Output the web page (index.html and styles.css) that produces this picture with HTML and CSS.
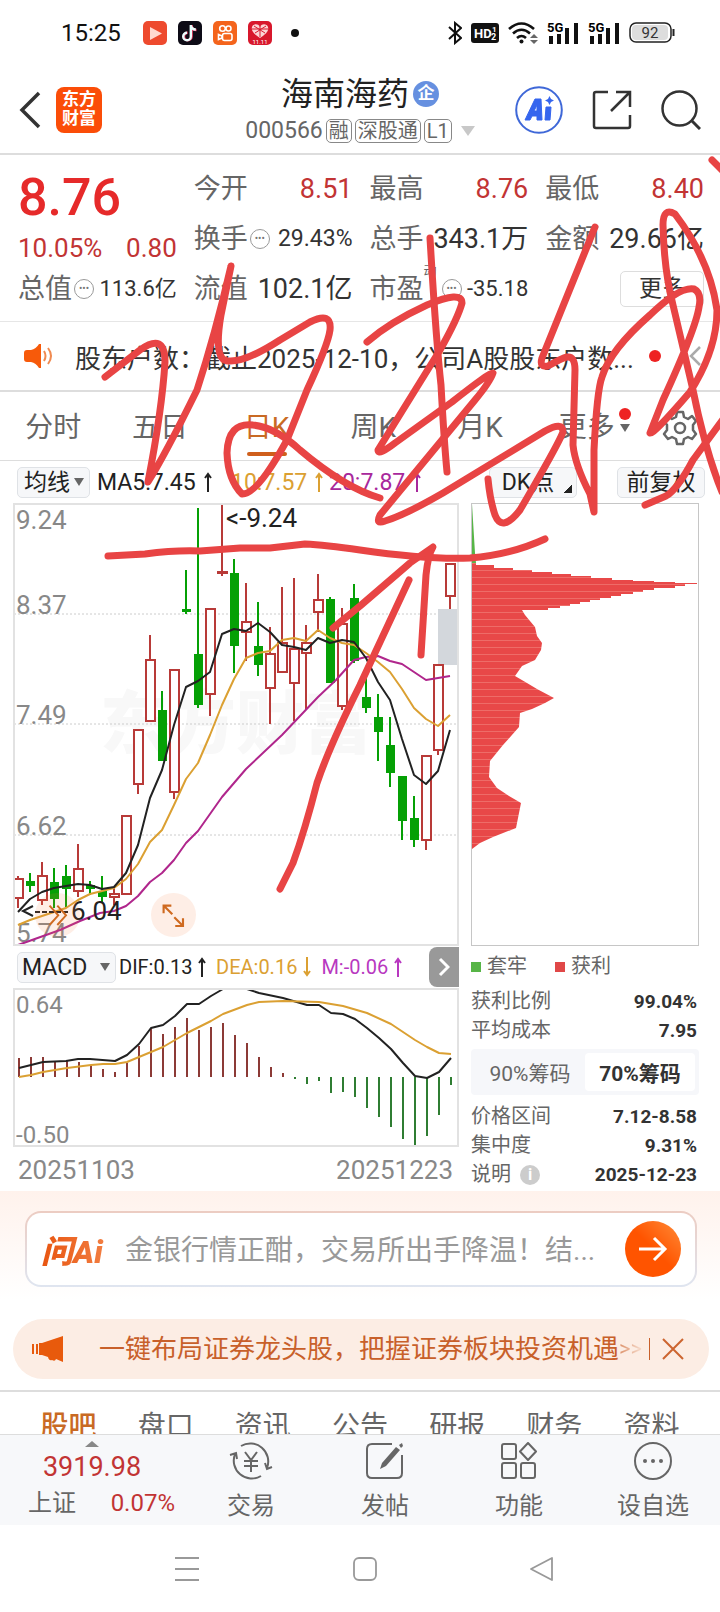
FILE: index.html
```html
<!DOCTYPE html>
<html lang="zh-CN">
<head>
    <meta charset="UTF-8">
    <meta name="viewport" content="width=device-width, initial-scale=1.0">
    <title>海南海药 000566</title>
    <link rel="stylesheet" href="styles.css">
</head>
<body>
<div class="page">
    <div class="status">
        <span class="time">15:25</span>
        <svg class="app" viewBox="0 0 24 24"><rect width="24" height="24" rx="5" fill="#ee4a2e"/><path d="M7 6l12 6.500-12 6.500z" fill="#ffd9d0"/></svg>
        <svg class="app" viewBox="0 0 24 24"><rect width="24" height="24" rx="5" fill="#0d0b16"/><path d="M13.500 4v11.500a3.800 3.800 0 1 1-3.800-3.800M13.500 5c.5 2.500 2.500 4 5 4" fill="none" stroke="#f0446a" stroke-width="2.600"/><path d="M12.800 4v11.500a3.800 3.800 0 1 1-3.800-3.800M12.800 4.500c.5 2.500 2.500 4 5 4" fill="none" stroke="#e9ffff" stroke-width="2.400"/></svg>
        <svg class="app" viewBox="0 0 24 24"><rect width="24" height="24" rx="5" fill="#f4641c"/><g fill="none" stroke="#fff" stroke-width="1.600"><circle cx="9.500" cy="7.500" r="2.800"/><circle cx="15.500" cy="7.500" r="2.500"/><rect x="9.500" y="12.500" width="9.500" height="7" rx="2"/><path d="M9 15l-3.500-1.500v5L9 17z"/></g></svg>
        <svg class="app" viewBox="0 0 24 24"><rect width="24" height="24" rx="5" fill="#d8182c"/><path d="M12 17C6 13 3 10 4 6c1-3 6-4 8 0 2-4 7-3 8 0 1 4-2 7-8 11z" fill="#fbd5d5"/><path d="M6 5l11 7M18 5L7 12M12 5v11M4 8h16" stroke="#d8182c"/><text x="12" y="23" font-size="6" text-anchor="middle" fill="#fff">11.11</text></svg>
        <span class="dot"></span>
        <div class="status-right">
            <svg width="14" height="24" viewBox="0 0 14 24"><path d="M1 6l12 11-6 5V2l6 5L1 18" fill="none" stroke="#111" stroke-width="2"/></svg>
            <svg width="28" height="20" viewBox="0 0 28 20"><rect width="28" height="20" rx="3" fill="#111"/><text x="3" y="15" font-size="13" font-weight="700" fill="#fff">HD</text><text x="21" y="9" font-size="8" font-weight="700" fill="#fff">1</text><text x="20" y="17" font-size="9" font-weight="700" fill="#fff">2</text></svg>
            <svg width="30" height="24" viewBox="0 0 30 24"><g fill="none" stroke="#111" stroke-width="2.600"><path d="M1 8q12.500-11 25 0M5 12.500q8.500-7.500 17 0M9 17q4.500-4 9 0"/></g><circle cx="13.500" cy="20.500" r="2" fill="#111"/><path d="M22 17l4-4 4 4zM22 19l4 4 4-4z" fill="#666"/></svg>
            <svg width="32" height="24" viewBox="0 0 32 24"><text x="0" y="11" font-size="13" font-weight="700">5G</text><path d="M4 15v8M12 13v10M20 7v16M29 2v21" stroke="#111" stroke-width="4"/></svg>
            <svg width="32" height="24" viewBox="0 0 32 24"><text x="0" y="11" font-size="13" font-weight="700">5G</text><path d="M4 15v8M12 13v10M20 7v16M29 2v21" stroke="#111" stroke-width="4"/></svg>
            <svg width="46" height="22" viewBox="0 0 46 22"><rect x="1" y="1" width="41" height="19" rx="6" fill="#fff" stroke="#222" stroke-width="1.500"/><rect x="3" y="3" width="36" height="15" rx="4" fill="#ddd"/><path d="M44.500 7v7" stroke="#222" stroke-width="2"/><text x="21" y="16" font-size="15" text-anchor="middle" fill="#333">92</text></svg>
        </div>
    </div>

    <header class="header">
        <div class="header-left">
            <button class="plain" aria-label="返回"><svg width="22" height="38" viewBox="0 0 22 38"><path d="M20 2L3 19l17 17" fill="none" stroke="#333" stroke-width="3.500"/></svg></button>
            <a class="brand" href="#">东方<br>财富</a>
        </div>
        <div class="header-title">
            <h1>海南海药<span class="ent">企</span></h1>
            <div class="code">000566<span class="tag">融</span><span class="tag">深股通</span><span class="tag">L1</span><i class="caret"></i></div>
        </div>
        <div class="header-right">
            <button class="plain" aria-label="Ai"><svg width="48" height="48" viewBox="0 0 48 48"><circle cx="24" cy="24" r="22.800" fill="#fff" stroke="#3f68d8" stroke-width="2"/><path d="M10 34h5l2-4h5v4h5l-1-21h-6zM19 25l3-6v6z" fill="#3565ee" fill-rule="evenodd" stroke="#3565ee" stroke-linejoin="round"/><path d="M31 21h5l-1 13h-5z" fill="#3565ee" stroke="#3565ee" stroke-linejoin="round"/><path d="M34.500 10l1.500 3 3 1.500-3 1.500-1.500 3-1.500-3-3-1.500 3-1.500z" fill="#3565ee"/></svg></button>
            <button class="plain" aria-label="分享"><svg width="40" height="40" viewBox="0 0 40 40"><path d="M16 2H4q-2 0-2 2v32q0 2 2 2h32q2 0 2-2V25M24 2h14v15M38 2L19 21" fill="none" stroke="#333" stroke-width="2.500"/></svg></button>
            <button class="plain" aria-label="搜索"><svg width="40" height="40" viewBox="0 0 40 40"><circle cx="18.500" cy="18.500" r="17" fill="none" stroke="#333" stroke-width="2.500"/><path d="M31 31l8 8" stroke="#333" stroke-width="3"/></svg></button>
        </div>
    </header>

    <section class="quote">
        <div class="quote-col">
            <div class="price">8.76</div>
            <div class="change"><span>10.05%</span><span>0.80</span></div>
            <div class="metric"><span>总值</span><i class="info">•••</i><b class="small">113.6亿</b></div>
        </div>
        <div class="quote-col">
            <div class="metric"><span>今开</span><b class="up">8.51</b></div>
            <div class="metric"><span>换手</span><i class="info">•••</i><b class="mid">29.43%</b></div>
            <div class="metric"><span>流值</span><b>102.1亿</b></div>
        </div>
        <div class="quote-col">
            <div class="metric"><span>最高</span><b class="up">8.76</b></div>
            <div class="metric"><span>总手</span><b>343.1万</b></div>
            <div class="metric"><span>市盈<sup>动</sup></span><i class="info info-far">•••</i><b class="small">-35.18</b></div>
        </div>
        <div class="quote-col">
            <div class="metric"><span>最低</span><b class="up">8.40</b></div>
            <div class="metric"><span>金额</span><b>29.66亿</b></div>
            <div class="metric"><button class="more">更多</button></div>
        </div>
    </section>

    <a class="notice" href="#">
        <svg width="32" height="26" viewBox="0 0 32 26"><path d="M1 10q0-3 3-3h4q5-1 8-6h2v24h-2q-3-5-8-6H4q-3 0-3-3z" fill="#f75a0a"/><path d="M21 8q3 5 0 10M25 5q6 8 0 16" fill="none" stroke="#f08a50" stroke-width="2"/></svg>
        <span class="notice-text">股东户数：截止2025-12-10，公司A股股东户数...</span>
        <span class="red-dot"></span>
        <svg width="13" height="20" viewBox="0 0 13 20"><path d="M11 1L2 10l9 9" fill="none" stroke="#aaa" stroke-width="2.500"/></svg>
    </a>

    <nav class="tabs">
        <a href="#">分时</a>
        <a href="#">五日</a>
        <a class="active" href="#">日K</a>
        <a href="#">周K</a>
        <a href="#">月K</a>
        <a href="#">更多<span class="tab-mark"></span></a>
        <button class="plain gear" aria-label="设置"><svg width="36" height="36" viewBox="0 0 36 36"><g fill="none" stroke="#666" stroke-width="2.500"><path d="M15 2h6l1 5 4 2 4-3 4 5-3 4v5l3 4-4 5-4-2-4 2-1 5h-6l-1-5-4-2-4 2-4-5 3-4v-5l-3-4 4-5 4 3 4-2z" stroke-linejoin="round"/><circle cx="18" cy="18" r="5"/></g></svg></button>
    </nav>

    <div class="indicators">
        <select class="pick" aria-label="主图指标"><option>均线</option></select>
        <span class="ma ma5">MA5:7.45<svg class="arrow" viewBox="0 0 8 20"><path d="M4 20V2M1 6l3-4 3 4"/></svg></span>
        <span class="ma ma10">10:7.57<svg class="arrow" viewBox="0 0 8 20"><path d="M4 20V2M1 6l3-4 3 4"/></svg></span>
        <span class="ma ma20">20:7.87<svg class="arrow" viewBox="0 0 8 20"><path d="M4 20V2M1 6l3-4 3 4"/></svg></span>
        <div class="indicator-right">
            <button class="chip dk">DK点</button>
            <button class="chip">前复权</button>
        </div>
    </div>

    <main class="board">
        <div class="board-left">
            <div class="kline">
                <svg viewBox="13 503 446 443">
                    <text class="watermark" x="100" y="748">东方财富</text>
                    <path d="M14 614H458M14 724H458M14 835H458" stroke="#ccc" stroke-dasharray="2 2"/>
                    <rect x="438" y="609" width="20" height="56" fill="#d3d7dc"/>
                    <g class="axis"><text x="16" y="529">9.24</text><text x="16" y="614">8.37</text><text x="16" y="724">7.49</text><text x="16" y="835">6.62</text><text x="16" y="942">5.74</text></g>
                    <!-- falling days -->
                    <path class="fall" d="M30 873v19M54 868v40M66 865v42M90 881v14M102 876v26M162 691v70M186 570v44M198 508v200M234 559v114M258 602v74M330 597v86M354 584v79M366 675v38M378 694v67M390 717v70M402 776v64M414 796v51"/>
                    <path fill="#05a005" d="M26 881h9v5h-9zM50 882h9v17h-9zM62 876h9v13h-9zM86 885h9v4h-9zM98 891h9v6h-9zM158 710h9v51h-9zM182 609h9v3h-9zM194 654h9v51h-9zM230 573h9v73h-9zM254 646h9v19h-9zM326 599h9v84h-9zM350 598h9v63h-9zM362 697h9v11h-9zM374 717h9v15h-9zM386 745h9v28h-9zM398 776h9v45h-9zM410 818h9v22h-9z"/>
                    <!-- rising days -->
                    <path class="rise" d="M18 876v32M42 862v43M78 844v53M114 888v17M138 784v10M150 635v24M174 792v7M210 694v22M222 503v73M246 583v78M270 627v97M282 587v56M294 578v143M306 625v85M318 574v58M342 608v102M426 840v10M438 750v5M450 596v13"/>
                    <path class="rise-box" d="M14 879h9v19h-9zM38 876h9v24h-9zM74 869h9v22h-9zM122 816h9v78h-9zM134 730h9v54h-9zM146 660h9v61h-9zM170 670h9v122h-9zM206 609h9v85h-9zM242 622h9v10h-9zM266 654h9v34h-9zM278 643h9v29h-9zM290 649h9v34h-9zM302 643h9v10h-9zM314 600h9v12h-9zM338 624h9v82h-9zM422 756h9v84h-9zM434 665h9v85h-9zM446 564h9v32h-9zM218 572h9v1h-9zM110 894h9v3h-9z"/>
                    <g class="line">
                        <polyline stroke="#b0268c" points="18,945 60,930 80,921 100,913 114,911 126,906 138,896 150,882 162,873 174,860 186,843 198,831 222,797 246,769 282,735 318,697 336,680 354,660 366,657 378,656 390,661 402,664 414,672 426,680 438,678 450,676"/>
                        <polyline stroke="#dba032" points="18,925 30,920 42,916 54,912 66,908 78,900 90,894 102,891 114,888 126,879 138,864 150,842 162,830 174,805 186,779 198,763 210,735 222,705 234,679 246,658 258,653 270,651 282,640 294,638 306,641 318,630 330,638 342,643 354,645 366,653 378,662 390,672 402,689 414,708 426,719 438,726 450,715"/>
                        <polyline stroke="#222" points="18,912 30,899 42,892 54,888 66,886 78,884 90,885 102,889 114,887 126,873 138,845 150,798 162,770 174,725 186,687 198,681 210,672 222,634 234,629 246,631 258,623 270,632 282,645 294,647 306,650 318,638 330,643 342,640 354,642 366,658 378,682 390,700 402,739 414,775 426,784 438,771 450,730"/>
                    </g>
                    <text class="mark" x="226" y="527">&lt;-9.24</text>
                    <path d="M33 906l-10 5 10 5" fill="none" stroke="#222" stroke-width="2"/>
                    <path d="M35 912h35" stroke="#222" stroke-width="2" stroke-dasharray="5 2"/>
                    <text class="mark" x="71" y="920">6.04</text>
                </svg>
                <button class="float skip" aria-label="快进"><svg viewBox="0 0 46 46"><path d="M15 13l9 10-9 10M23 13l9 10-9 10" fill="none" stroke="#cf6a20" stroke-width="2"/></svg></button>
                <button class="float expand" aria-label="全屏"><svg viewBox="0 0 46 46"><path d="M13 21v-8h8M13 13l9 9M25 34h8v-8M33 34l-9-9" fill="none" stroke="#cf6a20" stroke-width="2.200"/></svg></button>
            </div>

            <div class="macd-bar">
                <select class="pick pick-macd" aria-label="副图指标"><option>MACD</option></select>
                <span class="dif">DIF:0.13<svg class="arrow" viewBox="0 0 8 20"><path d="M4 20V2M1 6l3-4 3 4"/></svg></span>
                <span class="dea">DEA:0.16<svg class="arrow" viewBox="0 0 8 20"><path d="M4 0v18M1 14l3 4 3-4"/></svg></span>
                <span class="m">M:-0.06<svg class="arrow" viewBox="0 0 8 20"><path d="M4 20V2M1 6l3-4 3 4"/></svg></span>
                <button class="next" aria-label="更多指标"><svg width="12" height="20" viewBox="0 0 12 20"><path d="M2 2l8 8-8 8" fill="none" stroke="#fff" stroke-width="3"/></svg></button>
            </div>

            <svg class="macd" viewBox="13 988 446 159">
                <g class="axis axis-small"><text x="16" y="1013">0.64</text><text x="16" y="1143">-0.50</text></g>
                <path stroke="#8c3a36" stroke-width="2" d="M19 1077v-19M31 1077v-20M43 1077v-20M55 1077v-15M67 1077v-16M79 1077v-15M91 1077v-12M103 1077v-8M115 1077v-5M127 1077v-14M139 1077v-31M151 1077v-49M163 1077v-43M175 1077v-50M187 1077v-59M199 1077v-47M211 1077v-50M223 1077v-54M235 1077v-42M247 1077v-34M259 1077v-20M271 1077v-10M283 1077v-4"/>
                <path stroke="#2f7d32" stroke-width="2" d="M295 1077v2M307 1077v7M319 1077v4M331 1077v16M343 1077v15M355 1077v20M367 1077v31M379 1077v40M391 1077v50M403 1077v62M415 1077v70M427 1077v59M439 1077v38M451 1077v8"/>
                <g class="line">
                    <polyline stroke="#222" points="19,1068 43,1062 66,1061 78,1059 90,1059 115,1061 127,1055 139,1044 151,1028 163,1025 175,1016 187,1004 199,1004 211,996 223,989 247,989 259,993 283,998 307,1005 319,1005 331,1013 343,1014 355,1019 367,1028 379,1038 391,1049 403,1063 415,1076 427,1078 439,1072 451,1058"/>
                    <polyline stroke="#dba032" points="19,1077 31,1075 43,1072 67,1068 91,1065 103,1064 115,1064 127,1062 139,1057 151,1052 163,1047 175,1040 187,1033 199,1027 211,1021 223,1014 247,1005 259,1002 283,1001 319,1002 343,1006 367,1013 391,1024 415,1040 427,1047 439,1053 451,1054"/>
                </g>
            </svg>
            <div class="dates"><span>20251103</span><span>20251223</span></div>
        </div>

        <aside class="board-right">
            <svg class="chips" viewBox="471 503 228 443">
                <defs><pattern id="stripe" width="8" height="7" patternUnits="userSpaceOnUse"><rect width="8" height="7" fill="#e84848"/><path d="M0 3.500h8" stroke="#ee6c68"/></pattern></defs>
                <path d="M472 504l3 49 1 10h-5z" fill="#57b547"/>
                <path fill="url(#stripe)" d="M471 563H476V565H494V568H513V570H532V572H552V574H571V576H591V578H612V580H633V581H654V582H675V583H697V584H685V586H675V588H654V590H643V592H633V594H621V596H611V598H600V600H590V602H580V604H570V606H560V608H548V610H522L525 615L535 627L537 636L542 643L541 650L535 660L522 666L515 676L527 683L537 689L554 698L545 703L532 709L520 713L519 727L503 745L490 761L489 777L497 788L509 796L521 803L516 828L493 837L480 843L472 849V946H471Z"/>
            </svg>
            <div class="legend"><span class="trap">套牢</span><span class="gain">获利</span></div>
            <dl class="stats">
                <div><dt>获利比例</dt><dd>99.04%</dd></div>
                <div><dt>平均成本</dt><dd>7.95</dd></div>
            </dl>
            <div class="switch">
                <button>90%筹码</button>
                <button class="on">70%筹码</button>
            </div>
            <dl class="stats stats-last">
                <div><dt>价格区间</dt><dd>7.12-8.58</dd></div>
                <div><dt>集中度</dt><dd>9.31%</dd></div>
                <div><dt>说明<i class="tip">i</i></dt><dd>2025-12-23</dd></div>
            </dl>
        </aside>
    </main>

    <div class="ask">
        <div class="ask-box">
            <label class="ask-logo" for="ask">问Ai</label>
            <input id="ask" type="text" placeholder="金银行情正酣，交易所出手降温！结...">
            <button class="go" aria-label="发送"><svg width="30" height="26" viewBox="0 0 30 26"><path d="M1 13h26M16 2l11 11-11 11" fill="none" stroke="#fff" stroke-width="3"/></svg></button>
        </div>
    </div>

    <div class="promo">
        <svg width="32" height="26" viewBox="0 0 32 26"><path d="M1 8v10" stroke="#e85a0c" stroke-width="2"/><path d="M4 8h2v10H4zM7 7h3L31 0v26l-7-3q-1 3-4 1-3 1-4-3l-6-2H7z" fill="#e85a0c"/></svg>
        <a href="#">一键布局证券龙头股，把握证券板块投资机遇</a><span class="fade">&gt;&gt;</span>
        <button class="plain close" aria-label="关闭"><svg width="22" height="22" viewBox="0 0 22 22"><path d="M1 1l20 20M21 1L1 21" stroke="#cc6530" stroke-width="2"/></svg></button>
    </div>

    <nav class="subtabs">
        <a class="active" href="#">股吧</a>
        <a href="#">盘口</a>
        <a href="#">资讯</a>
        <a href="#">公告</a>
        <a href="#">研报</a>
        <a href="#">财务</a>
        <a href="#">资料</a>
    </nav>

    <footer class="bottom">
        <a class="index" href="#">
            <i class="index-caret"></i>
            <span class="index-value">3919.98</span>
            <span class="index-row"><span>上证</span><span class="up">0.07%</span></span>
        </a>
        <a class="action" href="#"><svg viewBox="0 0 44 38"><g fill="none" stroke="#666" stroke-width="2"><path d="M12 4A18 18 0 0 1 38 26M32 34A18 18 0 0 1 6 12M1 13l6-2 1 6M43 25l-5 2-2-6M16 10l6 8 6-8M22 18v12M15 19h14M15 24h14"/></g></svg>交易</a>
        <a class="action" href="#"><svg viewBox="0 0 44 38"><g fill="none" stroke="#666" stroke-width="2"><path d="M29 2H9Q4 2 4 7v24q0 5 5 5h25q5 0 5-5V13"/></g><path d="M33 5l4 3-14 16-6 3 2-6zM36 3l3-2 1 3-2 2z" fill="#666"/></svg>发帖</a>
        <a class="action" href="#"><svg viewBox="0 0 44 38"><g fill="none" stroke="#666" stroke-width="2"><rect x="5" y="2" width="14" height="15" rx="2"/><rect x="5" y="21" width="14" height="15" rx="2"/><rect x="24" y="21" width="14" height="15" rx="2"/><path d="M31 1l8 8.500-8 8.500-8-8.500z" stroke-linejoin="round"/></g></svg>功能</a>
        <a class="action" href="#"><svg viewBox="0 0 44 38"><circle cx="22" cy="19" r="18" fill="none" stroke="#666" stroke-width="2"/><g fill="#666"><circle cx="14" cy="19" r="2"/><circle cx="22" cy="19" r="2"/><circle cx="30" cy="19" r="2"/></g></svg>设自选</a>
    </footer>

    <div class="sysnav">
        <button class="plain" aria-label="菜单"><svg width="24" height="24" viewBox="0 0 24 24"><path d="M0 1h24M0 12h24M0 23h24" stroke="#999" stroke-width="1.800"/></svg></button>
        <button class="plain" aria-label="主页"><svg width="24" height="24" viewBox="0 0 24 24"><rect x="1" y="1" width="22" height="22" rx="5" fill="none" stroke="#999" stroke-width="1.800"/></svg></button>
        <button class="plain" aria-label="后退"><svg width="24" height="24" viewBox="0 0 24 24"><path d="M22 1v22L1 12z" fill="none" stroke="#999" stroke-width="1.800" stroke-linejoin="round"/></svg></button>
    </div>

    <!-- hand drawn notes on top of the screen -->
    <svg class="ink" viewBox="0 0 720 1612">
        <path d="M105 377L140 350Q165 332 165 362Q162 410 148 482Q165 455 197 390Q215 335 231 266L221 315Q213 362 229 361Q246 362 280 340L310 322Q332 311 330 330Q328 345 307 390L287 440Q257 495 242 494Q228 480 227 453Q228 422 253 425Q275 427 300 450Q345 488 380 498"/>
        <path d="M367 342Q390 322 427 305Q462 290 462 303Q458 318 440 350L378 450Q378 456 395 443L452 402Q490 372 493 373Q490 382 475 400L380 515Q375 525 385 521Q405 515 443 493L545 431Q563 421 563 432Q558 445 520 510Q502 533 495 515Q490 500 488 479"/>
        <path d="M430 238Q436 340 441 385Q444 440 447 472"/>
        <path d="M595 227L542 358Q539 368 548 366Q562 358 567 357Q575 356 575 370L573 445Q575 465 590 494L594 512L594 450Q597 390 602 377Q610 350 650 315Q680 286 694 289Q702 293 699 307Q696 328 663 400L650 433Q653 435 690 392Q717 350 717 310Q710 260 675 214Q663 207 663 225Q664 270 673 305L693 390Q705 450 722 492"/>
        <path d="M724 418Q710 437 693 460Q677 490 666 496L645 505"/>
        <path d="M712 160L724 172"/>
        <path d="M108 556L145 554Q175 550 200 551L240 548L270 548L305 544Q325 545 360 550Q430 560 470 558Q510 555 545 539"/>
        <path d="M333 628L360 606L410 563L433 547Q428 555 426 575L421 655"/>
        <path d="M409 580L360 685Q330 745 317 783Q305 830 293 863L280 889"/>
    </svg>
</div>
</body>
</html>
```
FILE: styles.css
```css
* {
    margin: 0;
    padding: 0;
    box-sizing: border-box;
}

body {
    background: #fff;
    color: #333;
    font-family: Roboto, "Noto Sans CJK SC", sans-serif;
}

a {
    color: inherit;
    text-decoration: none;
}

button,
select,
input {
    font: inherit;
    color: inherit;
    border: none;
    background: none;
}

i,
b {
    font-style: normal;
    font-weight: 400;
}

svg {
    display: block;
    flex-shrink: 0;
}

.page {
    position: relative;
    overflow: hidden;
}

.plain {
    display: flex;
}

.up {
    color: #c23434;
}

/* status bar */
.status {
    display: flex;
    align-items: center;
    gap: 11px;
    height: 66px;
    padding: 0 45px 0 61px;
    color: #111;
}

.time {
    font-size: 24px;
    margin-right: 11px;
}

.app {
    width: 24px;
    height: 24px;
}

.dot {
    width: 8px;
    height: 8px;
    margin-left: 8px;
    border-radius: 50%;
    background: #111;
}

.status-right {
    display: flex;
    align-items: center;
    gap: 9px;
    margin-left: auto;
}

/* header */
.header {
    display: grid;
    grid-template-columns: 1fr auto 1fr;
    align-items: center;
    height: 89px;
    padding: 0 19px;
    border-bottom: 2px solid #ddd;
}

.header-left,
.header-right {
    display: flex;
    align-items: center;
    gap: 15px;
}

.header-right {
    justify-content: flex-end;
    gap: 29px;
}

.brand {
    width: 46px;
    height: 46px;
    padding-top: 3px;
    border-radius: 8px;
    background: #fb4d08;
    color: #fff;
    font-size: 17px;
    font-weight: 700;
    line-height: 19px;
    text-align: center;
}

.header-title {
    padding-top: 4px;
}

.header-title h1 {
    display: flex;
    align-items: center;
    justify-content: center;
    color: #222;
    font-size: 32px;
    font-weight: 400;
    line-height: 38px;
}

.ent {
    width: 26px;
    height: 26px;
    margin-left: 4px;
    border-radius: 50%;
    background: #6690e0;
    color: #fff;
    font-size: 17px;
    font-weight: 700;
    line-height: 25px;
    text-align: center;
}

.code {
    display: flex;
    align-items: center;
    gap: 3px;
    height: 36px;
    color: #666;
    font-size: 23px;
}

.tag {
    padding: 0 2px;
    border: 1px solid #888;
    border-radius: 5px;
    font-size: 20px;
    line-height: 22px;
}

.caret {
    margin-left: 6px;
    border: 7px solid transparent;
    border-top: 10px solid #c8c8c8;
    border-bottom: 0;
}

/* quote */
.quote {
    display: grid;
    grid-template-columns: repeat(4, 1fr);
    gap: 17px;
    padding: 9px 16px 7px 18px;
    border-bottom: 1px solid #e6e6e6;
}

.price {
    height: 66px;
    color: #e62a2a;
    font-size: 52px;
    font-weight: 500;
    line-height: 68px;
}

.change {
    display: flex;
    justify-content: space-between;
    height: 34px;
    color: #c23434;
    font-size: 26px;
    line-height: 36px;
}

.metric {
    display: flex;
    align-items: center;
    height: 50px;
    color: #666;
    font-size: 27px;
    line-height: 48px;
    white-space: nowrap;
}

.metric b {
    margin-left: auto;
    color: #333;
    font-size: 27px;
}

.metric b.up {
    color: #c23434;
}

.metric b.mid {
    font-size: 23px;
}

.metric b.small {
    font-size: 22px;
}

.metric span {
    position: relative;
}

.metric sup {
    position: absolute;
    top: -18px;
    left: 100%;
    font-size: 13px;
}

.info {
    width: 20px;
    height: 20px;
    margin-left: 2px;
    border: 1px solid #999;
    border-radius: 50%;
    color: #777;
    font-size: 10px;
    line-height: 18px;
    text-align: center;
}

.info-far {
    margin-left: 18px;
}

.more {
    width: 84px;
    height: 36px;
    margin-left: auto;
    border: 1px solid #ddd;
    border-radius: 5px;
    color: #333;
    font-size: 23px;
    line-height: 32px;
}

/* notice */
.notice {
    display: flex;
    align-items: center;
    height: 70px;
    padding: 0 18px 0 23px;
    border-bottom: 2px solid #ddd;
    white-space: nowrap;
}

.notice-text {
    flex: 1;
    margin-left: 20px;
    font-size: 26px;
}

.red-dot {
    width: 12px;
    height: 12px;
    margin-right: 28px;
    border-radius: 50%;
    background: #e22;
}

/* period tabs */
.tabs {
    display: grid;
    grid-template-columns: repeat(6, 4fr) 3fr;
    align-items: center;
    height: 69px;
    border-bottom: 1px solid #ddd;
    color: #666;
    font-size: 28px;
    line-height: 72px;
    text-align: center;
}

.tabs a {
    position: relative;
}

.tabs .active {
    color: #c96a24;
}

.tabs .active::after {
    content: '';
    position: absolute;
    bottom: 8px;
    left: calc(50% - 20px);
    width: 40px;
    height: 4px;
    border-radius: 2px;
    background: #cf5f1c;
}

.gear {
    justify-content: center;
}

.tab-mark {
    position: absolute;
    top: 32px;
    right: 10px;
    border: 5px solid transparent;
    border-top: 8px solid #666;
    border-bottom: 0;
}

.tab-mark::before {
    content: '';
    position: absolute;
    top: -24px;
    left: -6px;
    width: 12px;
    height: 12px;
    border-radius: 50%;
    background: #e22;
}

/* indicator line */
.indicators {
    display: flex;
    align-items: center;
    height: 42px;
    padding: 0 15px 0 17px;
    white-space: nowrap;
}

.pick,
.chip {
    height: 31px;
    border: 1px solid #dfe2e6;
    border-radius: 5px;
    background: #f6f7f9;
    color: #222;
    font-size: 23px;
    line-height: 27px;
}

.pick {
    appearance: none;
    width: 73px;
    padding-left: 6px;
    background: #f6f7f9 url("data:image/svg+xml,%3Csvg xmlns='http://www.w3.org/2000/svg' width='10' height='8'%3E%3Cpath d='M0 0h10L5 8z' fill='%23666'/%3E%3C/svg%3E") no-repeat right 5px center;
}

.ma {
    display: flex;
    align-items: center;
    gap: 8px;
    font-size: 23px;
}

.ma5 {
    width: 134px;
    margin-left: 7px;
    color: #222;
}

.ma10,
.dea {
    color: #dba032;
}

.ma20 {
    color: #a8289c;
}

.m {
    color: #b838c0;
}

.ma10 {
    width: 98px;
}

.arrow {
    width: 8px;
    height: 20px;
    fill: none;
    stroke: currentColor;
    stroke-width: 2;
}

.indicator-right {
    display: flex;
    gap: 40px;
    margin-left: auto;
}

.chip {
    width: 88px;
}

.dk {
    padding-right: 10px;
    background: linear-gradient(135deg, transparent 50%, #222 50%) no-repeat right 4px bottom 4px / 8px 8px #f6f7f9;
}

/* charts */
.board {
    display: grid;
    grid-template-columns: 446fr 228fr;
    gap: 12px;
    padding: 0 21px 0 13px;
}

.kline {
    position: relative;
}

.kline svg,
.macd,
.chips {
    width: 100%;
    height: auto;
}

.kline > svg,
.macd {
    outline: 2px solid #e2e2e2;
    outline-offset: -2px;
    overflow: visible;
}

.chips {
    outline: 1px solid #c6c6c6;
    outline-offset: -1px;
}

.watermark {
    fill: #f8f8f8;
    font-size: 68px;
    font-weight: 900;
}

.axis {
    fill: #888;
    font-size: 26px;
}

.axis-small {
    font-size: 24px;
}

.mark {
    fill: #222;
    font-size: 26px;
}

.fall {
    stroke: #05a005;
    stroke-width: 2;
}

.rise {
    stroke: #b83a38;
    stroke-width: 2;
}

.rise-box {
    fill: #fff;
    stroke: #b83a38;
    stroke-width: 2;
}

.line {
    fill: none;
    stroke-width: 2;
    stroke-linejoin: round;
}

.float {
    position: absolute;
    bottom: 2%;
    width: 10%;
    border-radius: 50%;
    background: rgba(250, 120, 60, 0.13);
}

.skip {
    left: 5%;
}

.expand {
    left: 31%;
}

.macd-bar {
    display: flex;
    align-items: center;
    height: 42px;
    padding-left: 4px;
    font-size: 20px;
    white-space: nowrap;
}

.macd-bar span {
    display: flex;
    align-items: center;
    gap: 6px;
}

.pick-macd {
    width: 99px;
    padding-left: 4px;
    margin-right: 3px;
}

.dif {
    width: 97px;
    color: #222;
}

.m {
    margin-left: 10px;
}

.next {
    display: flex;
    align-items: center;
    justify-content: center;
    width: 30px;
    height: 40px;
    margin-left: auto;
    border-radius: 8px 0 0 8px;
    background: #999;
}

.dates {
    display: flex;
    justify-content: space-between;
    height: 44px;
    padding: 0 6px 0 5px;
    color: #888;
    font-size: 26px;
    line-height: 46px;
}

/* chip distribution */
.legend {
    display: flex;
    gap: 28px;
    height: 41px;
    color: #666;
    font-size: 20px;
    line-height: 41px;
}

.legend span {
    display: flex;
    align-items: center;
    gap: 6px;
}

.legend span::before {
    content: '';
    width: 10px;
    height: 10px;
}

.trap::before {
    background: #57b547;
}

.gain::before {
    background: #e04848;
}

.stats {
    font-size: 20px;
    line-height: 29px;
    white-space: nowrap;
}

.stats div {
    display: flex;
    justify-content: space-between;
}

.stats dt {
    display: flex;
    align-items: center;
    color: #666;
}

.stats dd {
    padding-right: 2px;
    color: #333;
    font-size: 19px;
    font-weight: 700;
}

.stats-last {
    padding-top: 7px;
}

.tip {
    width: 20px;
    height: 20px;
    margin-left: 9px;
    border-radius: 50%;
    background: #ccc;
    color: #fff;
    font-size: 16px;
    font-weight: 700;
    line-height: 20px;
    text-align: center;
}

.switch {
    display: grid;
    grid-template-columns: 1fr 1fr;
    height: 46px;
    margin-top: 4px;
    padding: 4px;
    border-radius: 4px;
    background: #f6f7fa;
    color: #666;
    font-size: 21px;
    white-space: nowrap;
}

.switch .on {
    border-radius: 4px;
    background: #fff;
    color: #333;
    font-weight: 700;
}

/* ask box */
.ask {
    padding: 20px 23px 13px 25px;
    background: linear-gradient(#fff2ec, #fff);
}

.ask-box {
    display: flex;
    align-items: center;
    height: 76px;
    padding: 0 14px;
    border: 2px solid transparent;
    border-radius: 16px;
    background: linear-gradient(#fff, #fff) padding-box, linear-gradient(#ecccc2, #dfe5f0) border-box;
}

.ask-logo {
    width: 84px;
    background: linear-gradient(90deg, #e85510, #f58a50);
    -webkit-background-clip: text;
    -webkit-text-fill-color: transparent;
    font-size: 32px;
    font-style: italic;
    font-weight: 900;
}

.ask-box input {
    flex: 1;
    min-width: 0;
    padding-top: 2px;
    font-size: 28px;
    outline: none;
}

.ask-box input::placeholder {
    color: #999;
    opacity: 1;
}

.go {
    display: flex;
    align-items: center;
    justify-content: center;
    width: 56px;
    height: 56px;
    border-radius: 50%;
    background: linear-gradient(45deg, #ff5400 50%, #ff8c38);
}

/* promo strip */
.promo {
    display: flex;
    align-items: center;
    height: 60px;
    margin: 19px 11px 11px 13px;
    padding: 0 25px 0 19px;
    border-radius: 30px;
    background: #fcede4;
    color: #c8602a;
    font-size: 26px;
    line-height: 56px;
    white-space: nowrap;
}

.promo a {
    margin-left: 35px;
}

.fade {
    width: 28px;
    overflow: hidden;
    background: linear-gradient(90deg, #dc9068, #fcede4);
    -webkit-background-clip: text;
    -webkit-text-fill-color: transparent;
    font-size: 22px;
}

.close {
    margin-left: auto;
    padding-left: 12px;
    border-left: 1px solid #c8602a;
}

/* content tabs */
.subtabs {
    display: grid;
    grid-template-columns: repeat(7, 1fr);
    height: 44px;
    padding: 15px 20px 0 20px;
    overflow: hidden;
    border-top: 2px solid #ddd;
    color: #666;
    font-size: 28px;
    line-height: 40px;
    text-align: center;
}

.subtabs .active {
    color: #c96a24;
    font-weight: 500;
}

/* bottom bar */
.bottom {
    display: grid;
    grid-template-columns: 184fr repeat(4, 134fr);
    height: 91px;
    border-top: 1px solid #ddd;
    background: #f7f8fa;
    color: #666;
    font-size: 24px;
}

.index {
    display: flex;
    flex-direction: column;
    align-items: center;
}

.index-caret {
    margin-top: 6px;
    border: 7px solid transparent;
    border-top: 0;
    border-bottom: 6px solid #888;
}

.index-value {
    color: #c23434;
    font-size: 27px;
    line-height: 40px;
}

.index-row {
    display: flex;
    justify-content: space-between;
    width: 100%;
    padding: 0 9px 0 28px;
    font-size: 24px;
    line-height: 32px;
}

.action {
    display: flex;
    flex-direction: column;
    align-items: center;
    gap: 9px;
    padding-top: 7px;
    line-height: 34px;
}

.action svg {
    width: 44px;
    height: 38px;
}

/* system navigation */
.sysnav {
    display: flex;
    align-items: center;
    justify-content: space-between;
    height: 87px;
    padding: 0 166px 0 175px;
}

.ink {
    position: absolute;
    top: 0;
    left: 0;
    width: 100%;
    height: auto;
    fill: none;
    stroke: #e84444;
    stroke-width: 7;
    stroke-linecap: round;
    stroke-linejoin: round;
    pointer-events: none;
}
```
